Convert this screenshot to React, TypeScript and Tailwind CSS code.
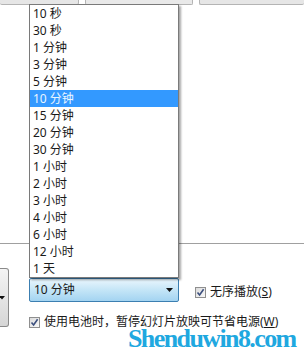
import React from "react";

const items = [
  "10 秒",
  "30 秒",
  "1 分钟",
  "3 分钟",
  "5 分钟",
  "10 分钟",
  "15 分钟",
  "20 分钟",
  "30 分钟",
  "1 小时",
  "2 小时",
  "3 小时",
  "4 小时",
  "6 小时",
  "12 小时",
  "1 天",
];

function CheckBox() {
  return (
    <span className="flex h-[11px] w-[11px] shrink-0 items-center justify-center border border-[#8f8f8f] bg-gradient-to-br from-[#dcdcdc] to-[#f8f8f8]">
      <svg width="9" height="9" viewBox="0 0 9 9">
        <path d="M1.5 4.5 L3.6 7 L7.6 1.2" fill="none" stroke="#3c4f7e" strokeWidth="1.6" />
      </svg>
    </span>
  );
}

export default function App() {
  return (
    <div
      className="relative h-[359px] w-[304px] overflow-hidden bg-white text-[12px] text-[#1a1a1a]"
      style={{ fontFamily: '"Noto Sans", "Noto Sans CJK SC", sans-serif' }}
    >
      {/* bottoms of the buttons above */}
      <div className="flex h-[5px] gap-[6px]">
        <div className="w-[79px] rounded-b-[2px] border-b border-r border-[#b4b4b4] bg-[#e6e6e6]" />
        <div className="w-[108px] rounded-b-[2px] border-x border-b border-[#b4b4b4] bg-[#e9e9e9]" />
        <div className="flex-1 rounded-b-[2px] border-b border-l border-[#b4b4b4] bg-[#e6e6e6]" />
      </div>

      <div className="mt-[238px] border-t border-[#a0a0a0]" />

      <div className="flex items-start">
        <div className="mt-[24px] flex h-[59px] w-[9px] shrink-0 items-center rounded-r-[3px] border border-l-0 border-[#8a8a8a] bg-gradient-to-b from-[#f4f4f4] to-[#d6d6d6]">
          <svg width="6" height="4" viewBox="0 0 6 4" className="-ml-[1px]">
            <path d="M0 0 H6 L3 3.5 Z" fill="#111" />
          </svg>
        </div>

        <div className="ml-[20px] flex w-[150px] shrink-0 flex-col">
          <div className="mt-[34px] flex h-[24px] w-[150px] items-center justify-between rounded-[2px] border border-[#3c7fb1] bg-gradient-to-b from-[#eaf6fd] via-[#c4e5f7] to-[#a3d4f1] pl-[4px] pr-[5px]">
            <span>10 分钟</span>
            <svg width="7" height="4" viewBox="0 0 7 4">
              <path d="M0 0 H7 L3.5 4 Z" fill="#111" />
            </svg>
          </div>
          <div className="mt-[11px] flex items-center gap-[4px] whitespace-nowrap">
            <CheckBox />
            <span>
              使用电池时，暂停幻灯片放映可节省电源(<span className="underline">W</span>)
            </span>
          </div>
        </div>

        <div className="ml-[16px] mt-[39px] flex items-center gap-[4px] whitespace-nowrap">
          <CheckBox />
          <span>
            无序播放(<span className="underline">S</span>)
          </span>
        </div>
      </div>

      {/* open dropdown list */}
      <div className="absolute left-[29px] top-[4px] w-[150px] border border-[#7a7a7a] bg-white shadow-[2px_2px_2px_rgba(0,0,0,0.35)]">
        {items.map((t, i) => (
          <div
            key={i}
            className={
              i === 5
                ? "flex h-[17px] items-center bg-[#3399ff] pl-[3px] text-[#eaf6ff]"
                : "flex h-[17px] items-center pl-[3px]"
            }
          >
            {t}
          </div>
        ))}
      </div>

      {/* watermark */}
      <div
        className="absolute left-[128px] top-[319px] text-[26px] font-bold tracking-[-1.6px] text-[#1fa8e0]"
        style={{ fontFamily: '"Liberation Serif", serif', textShadow: "0 0 2px #fff" }}
      >
        Shenduwin8.com
      </div>
    </div>
  );
}
